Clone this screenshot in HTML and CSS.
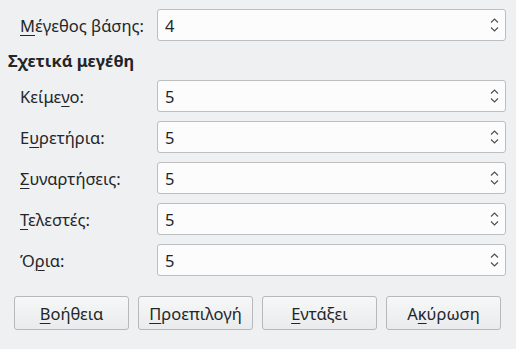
FILE: index.html
```html
<!DOCTYPE html>
<html lang="el">
<head>
    <meta charset="utf-8">
    <title>Μεγέθη γραμματοσειράς</title>
    <link rel="stylesheet" href="styles.css">
</head>
<body>
    <div class="dialog">
        <div class="form-row">
            <label class="field-label"><u>Μ</u>έγεθος βάσης:</label>
            <div class="spinbox">
                <span class="spin-value">4</span>
                <span class="spin-arrows">
                    <svg width="9" height="16" viewBox="0 0 9 16"><path d="M1 5.5 L4.5 2 L8 5.5" /><path d="M1 10.5 L4.5 14 L8 10.5" /></svg>
                </span>
            </div>
        </div>

        <h3 class="section-title">Σχετικά μεγέθη</h3>

        <div class="form-row">
            <label class="field-label">Κείμε<u>ν</u>ο:</label>
            <div class="spinbox">
                <span class="spin-value">5</span>
                <span class="spin-arrows">
                    <svg width="9" height="16" viewBox="0 0 9 16"><path d="M1 5.5 L4.5 2 L8 5.5" /><path d="M1 10.5 L4.5 14 L8 10.5" /></svg>
                </span>
            </div>
        </div>
        <div class="form-row">
            <label class="field-label">Ε<u>υ</u>ρετήρια:</label>
            <div class="spinbox">
                <span class="spin-value">5</span>
                <span class="spin-arrows">
                    <svg width="9" height="16" viewBox="0 0 9 16"><path d="M1 5.5 L4.5 2 L8 5.5" /><path d="M1 10.5 L4.5 14 L8 10.5" /></svg>
                </span>
            </div>
        </div>
        <div class="form-row">
            <label class="field-label"><u>Σ</u>υναρτήσεις:</label>
            <div class="spinbox">
                <span class="spin-value">5</span>
                <span class="spin-arrows">
                    <svg width="9" height="16" viewBox="0 0 9 16"><path d="M1 5.5 L4.5 2 L8 5.5" /><path d="M1 10.5 L4.5 14 L8 10.5" /></svg>
                </span>
            </div>
        </div>
        <div class="form-row">
            <label class="field-label"><u>Τ</u>ελεστές:</label>
            <div class="spinbox">
                <span class="spin-value">5</span>
                <span class="spin-arrows">
                    <svg width="9" height="16" viewBox="0 0 9 16"><path d="M1 5.5 L4.5 2 L8 5.5" /><path d="M1 10.5 L4.5 14 L8 10.5" /></svg>
                </span>
            </div>
        </div>
        <div class="form-row">
            <label class="field-label">Ό<u>ρ</u>ια:</label>
            <div class="spinbox">
                <span class="spin-value">5</span>
                <span class="spin-arrows">
                    <svg width="9" height="16" viewBox="0 0 9 16"><path d="M1 5.5 L4.5 2 L8 5.5" /><path d="M1 10.5 L4.5 14 L8 10.5" /></svg>
                </span>
            </div>
        </div>

        <div class="button-bar">
            <button class="dlg-button"><u>Β</u>οήθεια</button>
            <button class="dlg-button"><u>Π</u>ροεπιλογή</button>
            <button class="dlg-button"><u>Ε</u>ντάξει</button>
            <button class="dlg-button">Α<u>κ</u>ύρωση</button>
        </div>
    </div>
</body>
</html>
```

FILE: styles.css
```css
* {
    box-sizing: border-box;
}

body {
    margin: 0;
    padding: 0;
    width: 516px;
    height: 349px;
    background: #eff0f1;
    color: #232629;
    font-family: "Noto Sans", sans-serif;
    font-size: 16.5px;
}

u {
    text-decoration-thickness: 1px;
    text-underline-offset: 3px;
}

.dialog {
    padding: 9px 10px 0 8px;
}

.form-row {
    display: flex;
    align-items: center;
    height: 32px;
    margin-bottom: 9px;
}

.field-label {
    width: 149px;
    padding-left: 12px;
}

.spinbox {
    flex: 1;
    height: 32px;
    display: flex;
    align-items: center;
    justify-content: space-between;
    background: #fcfcfc;
    border: 1px solid #bcbebf;
    border-radius: 3px;
    padding: 0 6px 0 7px;
}

.spin-arrows {
    display: flex;
    align-items: center;
}

.spin-arrows svg {
    fill: none;
    stroke: #4d4d4d;
    stroke-width: 1.1;
}

.section-title {
    margin: 4px 0 8px 0;
    height: 22px;
    font-size: 16.5px;
    font-weight: bold;
    line-height: 22px;
}

.button-bar {
    display: flex;
    gap: 9px;
    margin-top: 20px;
    padding-left: 6px;
}

.dlg-button {
    width: 115px;
    height: 34px;
    border: 1px solid #b6b8ba;
    border-radius: 3px;
    background: linear-gradient(#f6f7f7, #eaebec);
    color: #232629;
    font-family: inherit;
    font-size: 16.5px;
    padding: 0;
}
```
